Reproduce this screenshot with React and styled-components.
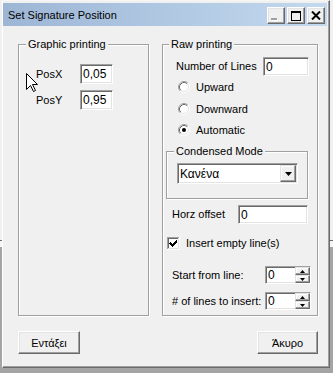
import React from 'react';
import styled, { createGlobalStyle } from 'styled-components';

const Global = createGlobalStyle`
  html, body { margin: 0; padding: 0; }
  body {
    width: 333px;
    height: 373px;
    overflow: hidden;
    background: linear-gradient(to bottom, #f0f0f0 0, #f0f0f0 240px, #6d6d6d 240px, #6d6d6d 241px, #f6f6f6 241px, #f6f6f6 247px, #a4a4a4 247px);
    font-family: "Liberation Sans", Arial, sans-serif;
    font-size: 11px;
    color: #000;
  }
`;

const Window = styled.div`
  position: relative;
  box-sizing: border-box;
  margin-left: 2px;
  width: 328px;
  height: 368px;
  background: #f0f0f0;
  border-left: 1px solid #fff;
  border-top: 1px solid #f6f6f6;
  border-right: 1px solid #696969;
  border-bottom: 1px solid #696969;
  box-shadow: inset -1px -1px 0 #a0a0a0;
  padding: 2px 2px 0 0;
  display: flex;
  flex-direction: column;
`;

const TitleBar = styled.div`
  flex: none;
  height: 23px;
  display: flex;
  align-items: flex-start;
  padding: 0 2px 0 5px;
  background: linear-gradient(to right, #9db6d5, #c3d9ef);
`;

const Title = styled.span`
  line-height: 13px;
  margin-top: 6px;
  white-space: nowrap;
`;

const CaptionButtons = styled.div`
  margin-left: auto;
  margin-top: 4px;
  display: flex;
  gap: 2px;
`;

const CaptionBtn = styled.div`
  box-sizing: border-box;
  width: 18px;
  height: 17px;
  background: #f0f0f0;
  border: 1px solid;
  border-color: #fff #696969 #696969 #fff;
  box-shadow: inset -1px -1px 0 #a0a0a0, inset 1px 1px 0 #e3e3e3;
  display: flex;
  align-items: ${p => (p.$bottom ? 'flex-end' : 'center')};
  justify-content: ${p => (p.$bottom ? 'flex-start' : 'center')};
  padding: ${p => (p.$bottom ? '0 0 2px 3px' : '0')};
`;

const Body = styled.div`
  display: flex;
  flex-direction: column;
  padding: 18px 0 0 15px;
`;

const GroupsRow = styled.div`
  display: flex;
  gap: 13px;
`;

const GroupBox = styled.div`
  position: relative;
  box-sizing: border-box;
  flex: none;
  width: ${p => p.$w}px;
  height: ${p => p.$h}px;
  margin-left: ${p => p.$ml || 0}px;
  margin-top: ${p => p.$mt || 0}px;
  border: 1px solid #a0a0a0;
  box-shadow: inset 1px 1px 0 #fff, 1px 1px 0 #fff;
  display: flex;
  flex-direction: column;
  align-items: flex-start;
`;

const Legend = styled.span`
  position: absolute;
  top: -7px;
  left: ${p => p.$left ?? 7}px;
  padding: 0 2px;
  background: #f0f0f0;
  line-height: 13px;
  white-space: nowrap;
`;

const Row = styled.div`
  flex: none;
  display: flex;
  align-items: center;
  height: ${p => p.$h}px;
  margin-left: ${p => p.$ml}px;
  margin-top: ${p => p.$mt}px;
`;

const Label = styled.span`
  flex: none;
  width: ${p => (p.$w ? `${p.$w}px` : 'auto')};
  margin-left: ${p => p.$ml || 0}px;
  line-height: 13px;
  white-space: nowrap;
`;

const Sunken = styled.div`
  box-sizing: border-box;
  flex: none;
  width: ${p => p.$w}px;
  height: ${p => p.$h}px;
  background: #fff;
  border: 1px solid;
  border-color: #a0a0a0 #fff #fff #a0a0a0;
  box-shadow: inset 1px 1px 0 #696969, inset -1px -1px 0 #e3e3e3;
  display: flex;
  align-items: center;
  padding: ${p => p.$pad || '0 0 0 2px'};
  font-size: 12px;
  line-height: 14px;
`;

const ValueText = styled.span`
  flex: 1;
  white-space: nowrap;
`;

const DropBtn = styled.div`
  box-sizing: border-box;
  flex: none;
  width: 16px;
  height: 100%;
  background: #f0f0f0;
  border: 1px solid;
  border-color: #e3e3e3 #696969 #696969 #e3e3e3;
  box-shadow: inset -1px -1px 0 #a0a0a0, inset 1px 1px 0 #fff;
  display: flex;
  align-items: center;
  justify-content: center;
`;

const SpinButtons = styled.div`
  flex: none;
  display: flex;
  flex-direction: column;
  width: 15px;
  height: 100%;
`;

const SpinBtn = styled.div`
  box-sizing: border-box;
  flex: 1;
  background: #f0f0f0;
  border: 1px solid;
  border-color: #e3e3e3 #696969 #696969 #e3e3e3;
  box-shadow: inset -1px -1px 0 #a0a0a0, inset 1px 1px 0 #fff;
  display: flex;
  align-items: center;
  justify-content: center;
`;

const ButtonsRow = styled.div`
  width: 300px;
  margin-top: 15px;
  display: flex;
  justify-content: space-between;
`;

const PushButton = styled.button`
  box-sizing: border-box;
  width: ${p => p.$w}px;
  height: 23px;
  margin: 0;
  padding: 0;
  background: #f0f0f0;
  font-family: "Liberation Sans", Arial, sans-serif;
  font-size: 11px;
  color: #000;
  border: 1px solid;
  border-color: #fff #696969 #696969 #fff;
  box-shadow: inset -1px -1px 0 #a0a0a0, inset 1px 1px 0 #e3e3e3;
`;

const Cursor = styled.svg`
  position: absolute;
  left: 23px;
  top: 72px;
`;

const Radio = ({ checked }) => (
  <svg width="12" height="12" viewBox="0 0 12 12" style={{ flex: 'none' }}>
    <circle cx="6" cy="6" r="5" fill="#fff" />
    <path d="M2.11 9.89 A5.5 5.5 0 0 1 9.89 2.11" fill="none" stroke="#a0a0a0" />
    <path d="M9.89 2.11 A5.5 5.5 0 0 1 2.11 9.89" fill="none" stroke="#fff" />
    <path d="M2.82 9.18 A4.5 4.5 0 0 1 9.18 2.82" fill="none" stroke="#696969" />
    <path d="M9.18 2.82 A4.5 4.5 0 0 1 2.82 9.18" fill="none" stroke="#e3e3e3" />
    {checked && <circle cx="6" cy="6" r="2" fill="#000" />}
  </svg>
);

const CheckBox = () => (
  <svg width="13" height="13" viewBox="0 0 13 13" style={{ flex: 'none' }} shapeRendering="crispEdges">
    <rect x="0" y="0" width="13" height="13" fill="#fff" />
    <rect x="0" y="0" width="12" height="1" fill="#a0a0a0" />
    <rect x="0" y="0" width="1" height="12" fill="#a0a0a0" />
    <rect x="1" y="1" width="10" height="1" fill="#696969" />
    <rect x="1" y="1" width="1" height="10" fill="#696969" />
    <rect x="1" y="11" width="11" height="1" fill="#e3e3e3" />
    <rect x="11" y="1" width="1" height="11" fill="#e3e3e3" />
    <path
      d="M3 5h1v1h1v1h1v-1h1v-1h1v-1h1v-1h1v3h-1v1h-1v1h-1v1h-1v1h-1v-1h-1v-1h-1v-1h-1z"
      fill="#000"
    />
  </svg>
);

const DownTri = () => (
  <svg width="7" height="4" viewBox="0 0 7 4">
    <path d="M0 0h7L3.5 4z" fill="#000" />
  </svg>
);

const SmallTri = ({ up }) => (
  <svg width="5" height="3" viewBox="0 0 5 3">
    <path d={up ? 'M2.5 0L5 3H0z' : 'M0 0h5L2.5 3z'} fill="#000" />
  </svg>
);

const SpinBox = ({ value }) => (
  <Sunken $w={46} $h={18} $pad="0 0 0 2px">
    <ValueText>{value}</ValueText>
    <SpinButtons>
      <SpinBtn><SmallTri up /></SpinBtn>
      <SpinBtn><SmallTri /></SpinBtn>
    </SpinButtons>
  </Sunken>
);

export default function App() {
  return (
    <>
      <Global />
      <Window>
        <TitleBar>
          <Title>Set Signature Position</Title>
          <CaptionButtons>
            <CaptionBtn $bottom>
              <svg width="7" height="3" viewBox="0 0 7 3" shapeRendering="crispEdges">
                <rect x="0" y="0" width="6" height="2" fill="#a0a0a0" />
                <rect x="1" y="2" width="6" height="1" fill="#fff" />
                <rect x="6" y="1" width="1" height="2" fill="#fff" />
              </svg>
            </CaptionBtn>
            <CaptionBtn>
              <svg width="10" height="10" viewBox="0 0 10 10" shapeRendering="crispEdges">
                <rect x="0" y="0" width="10" height="2" fill="#000" />
                <rect x="0" y="0" width="1" height="10" fill="#000" />
                <rect x="9" y="0" width="1" height="10" fill="#000" />
                <rect x="0" y="9" width="10" height="1" fill="#000" />
              </svg>
            </CaptionBtn>
            <CaptionBtn>
              <svg width="10" height="9" viewBox="0 0 10 9">
                <path d="M1 0.5L9 8.5M9 0.5L1 8.5" stroke="#000" strokeWidth="2" />
              </svg>
            </CaptionBtn>
          </CaptionButtons>
        </TitleBar>

        <Body>
          <GroupsRow>
            <GroupBox $w={131} $h={272}>
              <Legend>Graphic printing</Legend>
              <Row $ml={17} $mt={19} $h={20}>
                <Label $w={44}>PosX</Label>
                <Sunken $w={33} $h={20}><ValueText>0,05</ValueText></Sunken>
              </Row>
              <Row $ml={17} $mt={6} $h={20}>
                <Label $w={44}>PosY</Label>
                <Sunken $w={33} $h={20}><ValueText>0,95</ValueText></Sunken>
              </Row>
            </GroupBox>

            <GroupBox $w={156} $h={272}>
              <Legend $left={6}>Raw printing</Legend>
              <Row $ml={13} $mt={12} $h={19}>
                <Label $w={87}>Number of Lines</Label>
                <Sunken $w={46} $h={19}><ValueText>0</ValueText></Sunken>
              </Row>
              <Row $ml={15} $mt={3} $h={16}>
                <Radio />
                <Label $ml={6}>Upward</Label>
              </Row>
              <Row $ml={15} $mt={6} $h={16}>
                <Radio />
                <Label $ml={6}>Downward</Label>
              </Row>
              <Row $ml={15} $mt={5} $h={16}>
                <Radio checked />
                <Label $ml={6}>Automatic</Label>
              </Row>

              <GroupBox $w={142} $h={48} $ml={3} $mt={13}>
                <Legend>Condensed Mode</Legend>
                <Row $ml={10} $mt={11} $h={21}>
                  <Sunken $w={121} $h={21} $pad="1px 1px 1px 2px">
                    <ValueText>Κανένα</ValueText>
                    <DropBtn><DownTri /></DropBtn>
                  </Sunken>
                </Row>
              </GroupBox>

              <Row $ml={9} $mt={6} $h={19}>
                <Label $w={66}>Horz offset</Label>
                <Sunken $w={70} $h={19}><ValueText>0</ValueText></Sunken>
              </Row>
              <Row $ml={4} $mt={13} $h={13}>
                <CheckBox />
                <Label $ml={6}>Insert empty line(s)</Label>
              </Row>
              <Row $ml={9} $mt={16} $h={18}>
                <Label $w={93}>Start from line:</Label>
                <SpinBox value="0" />
              </Row>
              <Row $ml={9} $mt={8} $h={18}>
                <Label $w={93}># of lines to insert:</Label>
                <SpinBox value="0" />
              </Row>
            </GroupBox>
          </GroupsRow>

          <ButtonsRow>
            <PushButton $w={62}>Εντάξει</PushButton>
            <PushButton $w={61}>Άκυρο</PushButton>
          </ButtonsRow>
        </Body>

        <Cursor width="12" height="19" viewBox="0 0 12 19">
          <path
            d="M0.5 0.5L0.5 16.5L4.5 12.5L7.5 18.5L9.5 17.5L6.5 11.5L11.5 11.5Z"
            fill="#fff"
            stroke="#000"
            strokeLinejoin="miter"
          />
        </Cursor>
      </Window>
    </>
  );
}
